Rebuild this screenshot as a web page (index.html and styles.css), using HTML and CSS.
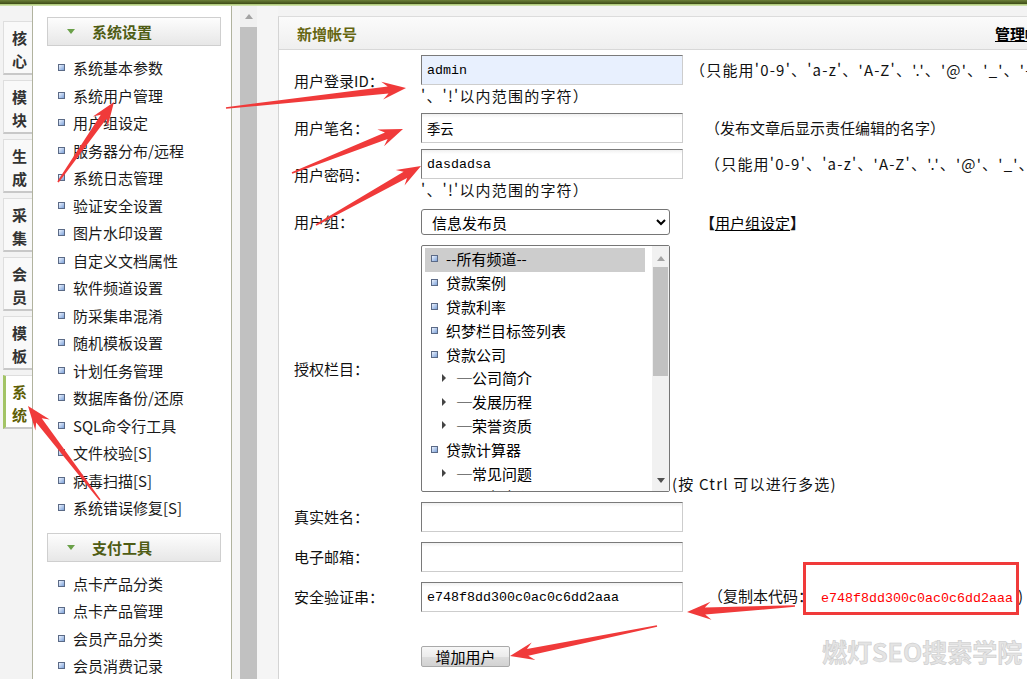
FILE: index.html
```html
<!DOCTYPE html>
<html lang="zh-CN">
<head>
    <meta charset="UTF-8">
    <meta name="viewport" content="width=device-width, initial-scale=1.0">
    <title>新增帐号</title>
    <link rel="stylesheet" href="styles.css">
</head>
<body>
    <div class="topbar"></div>
    <div class="frame">
        <div class="tabs">
            <div class="tab">核<br>心</div>
            <div class="tab">模<br>块</div>
            <div class="tab">生<br>成</div>
            <div class="tab">采<br>集</div>
            <div class="tab">会<br>员</div>
            <div class="tab">模<br>板</div>
            <div class="tab active">系<br>统</div>
        </div>

        <div class="menu">
            <div class="menu-head"><span class="caret"></span>系统设置</div>
            <ul class="menu-list">
                <li><i class="sq"></i>系统基本参数</li>
                <li><i class="sq"></i>系统用户管理</li>
                <li><i class="sq"></i>用户组设定</li>
                <li><i class="sq"></i>服务器分布/远程</li>
                <li><i class="sq"></i>系统日志管理</li>
                <li><i class="sq"></i>验证安全设置</li>
                <li><i class="sq"></i>图片水印设置</li>
                <li><i class="sq"></i>自定义文档属性</li>
                <li><i class="sq"></i>软件频道设置</li>
                <li><i class="sq"></i>防采集串混淆</li>
                <li><i class="sq"></i>随机模板设置</li>
                <li><i class="sq"></i>计划任务管理</li>
                <li><i class="sq"></i>数据库备份/还原</li>
                <li><i class="sq"></i>SQL命令行工具</li>
                <li><i class="sq"></i>文件校验[S]</li>
                <li><i class="sq"></i>病毒扫描[S]</li>
                <li><i class="sq"></i>系统错误修复[S]</li>
            </ul>
            <div class="menu-head"><span class="caret"></span>支付工具</div>
            <ul class="menu-list">
                <li><i class="sq"></i>点卡产品分类</li>
                <li><i class="sq"></i>点卡产品管理</li>
                <li><i class="sq"></i>会员产品分类</li>
                <li><i class="sq"></i>会员消费记录</li>
            </ul>
        </div>

        <div class="gutter">
            <div class="vscroll">
                <div class="sb-btn"><span class="arr-up"></span></div>
                <div class="sb-thumb"></div>
            </div>
        </div>

        <div class="main">
            <div class="main-head">
                <span class="title">新增帐号</span>
                <a class="manage" href="#">管理帐号</a>
            </div>
            <div class="form">
                <div class="row tight">
                    <label>用户登录ID：</label>
                    <div class="cell">
                        <div class="line">
                            <input class="txt autofill" type="text" value="admin">
                            <span class="hint spaced">（只能用'0-9'、'a-z'、'A-Z'、'.'、'@'、'_'、'-</span>
                        </div>
                        <div class="wrap">'、'!'以内范围的字符）</div>
                    </div>
                </div>
                <div class="row tight">
                    <label>用户笔名：</label>
                    <div class="cell">
                        <div class="line">
                            <input class="txt" type="text" value="季云">
                            <span class="hint far">（发布文章后显示责任编辑的名字）</span>
                        </div>
                    </div>
                </div>
                <div class="row tight">
                    <label>用户密码：</label>
                    <div class="cell">
                        <div class="line">
                            <input class="txt" type="text" value="dasdadsa">
                            <span class="hint far spaced">（只能用'0-9'、'a-z'、'A-Z'、'.'、'@'、'_'、'-</span>
                        </div>
                        <div class="wrap">'、'!'以内范围的字符）</div>
                    </div>
                </div>
                <div class="row">
                    <label>用户组：</label>
                    <div class="cell">
                        <div class="line">
                            <select class="group">
                                <option>信息发布员</option>
                                <option>超级管理员</option>
                            </select>
                            <span class="group-link">【<a href="#">用户组设定</a>】</span>
                        </div>
                    </div>
                </div>
                <div class="row">
                    <label>授权栏目：</label>
                    <div class="cell">
                        <div class="line bottom">
                            <div class="listbox">
                                <ul class="opts">
                                    <li class="on"><i class="sq"></i>--所有频道--</li>
                                    <li><i class="sq"></i>贷款案例</li>
                                    <li><i class="sq"></i>贷款利率</li>
                                    <li><i class="sq"></i>织梦栏目标签列表</li>
                                    <li><i class="sq"></i>贷款公司</li>
                                    <li class="sub"><i class="tri"></i>─公司简介</li>
                                    <li class="sub"><i class="tri"></i>─发展历程</li>
                                    <li class="sub"><i class="tri"></i>─荣誉资质</li>
                                    <li><i class="sq"></i>贷款计算器</li>
                                    <li class="sub"><i class="tri"></i>─常见问题</li>
                                    <li class="sub"><i class="tri"></i>─服务中心</li>
                                </ul>
                                <div class="lb-scroll">
                                    <div class="sb-btn"><span class="arr-up"></span></div>
                                    <div class="lb-thumb"></div>
                                    <div class="lb-space"></div>
                                    <div class="sb-btn"><span class="arr-down"></span></div>
                                </div>
                            </div>
                            <span class="multi-tip">(按 Ctrl 可以进行多选)</span>
                        </div>
                    </div>
                </div>
                <div class="row">
                    <label>真实姓名：</label>
                    <div class="cell"><div class="line"><input class="txt" type="text"></div></div>
                </div>
                <div class="row">
                    <label>电子邮箱：</label>
                    <div class="cell"><div class="line"><input class="txt" type="text"></div></div>
                </div>
                <div class="row">
                    <label>安全验证串：</label>
                    <div class="cell">
                        <div class="line">
                            <input class="txt" type="text" value="e748f8dd300c0ac0c6dd2aaa">
                            <span class="hint code-hint">（复制本代码：<span class="code">e748f8dd300c0ac0c6dd2aaa</span>)</span>
                        </div>
                    </div>
                </div>
                <div class="row submit">
                    <span></span>
                    <div class="cell"><button class="btn" type="button">增加用户</button></div>
                </div>
            </div>
        </div>
    </div>

    <div class="watermark">燃灯SEO搜索学院</div>

    <svg class="marks" id="marks" width="1027" height="679" viewBox="0 0 1027 679">
        <rect x="804.5" y="563.5" width="213" height="50" fill="none" stroke="#f03a3a" stroke-width="3"/>
    </svg>

    <script>
        // 截图标注箭头：起点 x,y -> 箭头尖 x,y
        var arrows = [
            [226, 108, 406, 88],
            [58, 182, 114, 102],
            [292, 173, 403, 129],
            [316, 225, 421, 166],
            [100, 500, 28, 406],
            [795, 606, 687, 612],
            [657, 626, 510, 656]
        ];
        var svg = document.getElementById('marks');
        arrows.forEach(function (a) {
            var dx = a[2] - a[0], dy = a[3] - a[1];
            var len = Math.sqrt(dx * dx + dy * dy);
            var ux = dx / len, uy = dy / len, nx = -uy, ny = ux;
            function p(back, side) {
                return (a[2] - ux * back + nx * side).toFixed(1) + ',' + (a[3] - uy * back + ny * side).toFixed(1);
            }
            var poly = document.createElementNS('http://www.w3.org/2000/svg', 'polygon');
            poly.setAttribute('points', [p(0, 0), p(24, 9), p(18, 3.5), p(len, 0.8), p(len, -0.8), p(18, -3.5), p(24, -9)].join(' '));
            poly.setAttribute('fill', '#f03a3a');
            svg.appendChild(poly);
        });
    </script>
</body>
</html>
```

FILE: styles.css
```css
* {
    box-sizing: border-box;
}
html, body {
    margin: 0;
    padding: 0;
}
body {
    position: relative;
    width: 1027px;
    height: 679px;
    overflow: hidden;
    font-family: "Noto Sans CJK SC", "Liberation Sans", sans-serif;
    font-size: 15px;
    color: #111;
    background: #f3f3f3;
}
.topbar {
    height: 6px;
    background: linear-gradient(#6b8038 0, #3d4b17 4px, #a7c46c 4px, #d9e8bc 6px);
}
.frame {
    display: flex;
    height: 673px;
    overflow: hidden;
}

/* 左侧竖排标签 */
.tabs {
    flex: none;
    width: 33px;
    padding: 15px 0 0 3px;
    border-right: 1px solid #b1b39f;
    display: flex;
    flex-direction: column;
    gap: 5px;
}
.tab {
    height: 54px;
    padding: 4px 0 0 3px;
    background: #f9f9f9;
    border: 1px solid #dedede;
    border-right: none;
    border-bottom: 2px solid #c8c8c8;
    text-align: center;
    font-weight: bold;
    line-height: 23px;
    color: #333;
}
.tab.active {
    background: #fff;
    border-left: 3px solid #a3c466;
    padding-left: 1px;
    color: #5e5e06;
}

/* 菜单 */
.menu {
    flex: none;
    width: 199px;
    padding-top: 11px;
    background: #fff;
    border-right: 1px solid #b1b39f;
}
.menu-head {
    margin: 0 10px 0 14px;
    height: 29px;
    padding-left: 19px;
    border: 1px solid #cfcfcf;
    background: linear-gradient(#fdfdfd, #e7e7e7);
    display: flex;
    align-items: center;
    font-weight: bold;
    color: #4f5c14;
}
.caret {
    width: 0;
    height: 0;
    border-left: 4px solid transparent;
    border-right: 4px solid transparent;
    border-top: 5px solid #6aa048;
    margin-right: 17px;
}
.menu-list {
    list-style: none;
    margin: 0;
    padding: 8px 0 11px;
}
.menu-list li {
    height: 27.5px;
    padding-left: 25px;
    display: flex;
    align-items: center;
    white-space: nowrap;
    color: #1a1a1a;
}
.sq {
    flex: none;
    width: 7px;
    height: 7px;
    margin-right: 8px;
    border: 1px solid #5b6a86;
    background: linear-gradient(135deg, #eef4ff, #7da2d9);
}

/* 菜单滚动条 */
.gutter {
    flex: none;
    width: 46px;
    padding-left: 8px;
    background: #f5f5f5;
}
.vscroll {
    width: 17px;
    height: 100%;
    display: flex;
    flex-direction: column;
    background: #f0f0f0;
}
.vscroll .sb-btn {
    height: 21px;
}
.sb-btn {
    flex: none;
    height: 17px;
    display: flex;
    align-items: center;
    justify-content: center;
}
.arr-up {
    width: 0;
    height: 0;
    border-left: 4px solid transparent;
    border-right: 4px solid transparent;
    border-bottom: 5px solid #a3a3a3;
}
.arr-down {
    width: 0;
    height: 0;
    border-left: 4px solid transparent;
    border-right: 4px solid transparent;
    border-top: 5px solid #505050;
}
.sb-thumb {
    flex: 1;
    background: #c1c1c1;
}

/* 主区域 */
.main {
    flex: none;
    width: 789px;
    margin-top: 10px;
    background: #fff;
    border-left: 1px solid #d4d4d4;
    border-top: 1px solid #dcdcdc;
}
.main-head {
    height: 33px;
    padding: 0 12px 0 18px;
    border-bottom: 1px solid #d8d8d8;
    background: linear-gradient(#fbfbfb, #efefef);
    display: flex;
    align-items: center;
    justify-content: space-between;
    font-weight: bold;
}
.main-head .title {
    color: #666611;
}
.main-head .manage {
    color: #000;
    text-decoration: underline;
}
.form {
    padding: 2px 0 0 15px;
}
.row {
    display: grid;
    grid-template-columns: 127px auto;
    align-items: center;
    padding: 5px 0;
}
.row.tight {
    padding: 3px 0;
}
.row.submit {
    padding-top: 29px;
}
.row label {
    line-height: 20px;
    white-space: nowrap;
}
.line {
    display: flex;
    align-items: center;
    white-space: nowrap;
}
.line.bottom {
    align-items: flex-end;
}
.wrap {
    line-height: 22px;
    letter-spacing: 1.2px;
    white-space: nowrap;
}
.txt {
    width: 262px;
    height: 30px;
    margin: 0;
    padding: 0 5px;
    border: 1px solid;
    border-color: #7a7a7a #cdcdcd #cdcdcd #7a7a7a;
    background: linear-gradient(#f0f0f0, #fff 4px);
    font-family: "Liberation Mono", "Noto Sans CJK SC", monospace;
    font-size: 13.33px;
    color: #000;
}
.txt.autofill {
    background: #e8f0fe;
}
.hint {
    margin-left: 7px;
    line-height: 20px;
}
.hint.far {
    margin-left: 22px;
}
.hint.spaced {
    letter-spacing: 1.2px;
}
.code-hint {
    margin-left: 25px;
}
.code {
    margin: 0 5px 0 8px;
    font-family: "Liberation Mono", monospace;
    font-size: 13.33px;
    color: #f00;
}
.group {
    width: 249px;
    height: 26px;
    margin: 0;
    padding-left: 6px;
    border: 1px solid #767676;
    border-radius: 3px;
    background: #fff;
    font-family: "Noto Sans CJK SC", sans-serif;
    font-size: 15px;
    color: #000;
}
.group-link {
    margin-left: 30px;
    font-weight: bold;
}
.group-link a {
    color: #000;
    font-weight: normal;
    text-decoration: underline;
}

/* 多选栏目 */
.listbox {
    flex: none;
    width: 249px;
    height: 247px;
    border: 1px solid #767676;
    border-radius: 2px;
    background: #fff;
    display: flex;
}
.opts {
    flex: 1;
    list-style: none;
    margin: 0;
    padding: 2px 7px 0 3px;
    overflow: hidden;
}
.opts li {
    height: 23.8px;
    padding: 0 0 2px 6px;
    display: flex;
    align-items: center;
    white-space: nowrap;
    color: #000;
}
.opts li.on {
    background: #cdcdcd;
}
.opts li.sub {
    padding-left: 17px;
}
.tri {
    flex: none;
    width: 0;
    height: 0;
    border-top: 4px solid transparent;
    border-bottom: 4px solid transparent;
    border-left: 4px solid #444;
    margin-right: 11px;
}
.lb-scroll {
    flex: none;
    width: 17px;
    padding: 4px 0 2px;
    background: #f1f1f1;
    display: flex;
    flex-direction: column;
}
.lb-thumb {
    height: 109px;
    margin: 0 1px;
    background: #c1c1c1;
}
.lb-space {
    flex: 1;
}
.multi-tip {
    margin-left: 2px;
    line-height: 16px;
    letter-spacing: 1.2px;
}
.btn {
    width: 89px;
    height: 21px;
    padding: 0;
    border: 1px solid #a9a9a9;
    border-radius: 2px;
    background: linear-gradient(#f7f7f7 0, #ececec 50%, #dedede 50%, #d2d2d2 100%);
    font-family: "Noto Sans CJK SC", sans-serif;
    font-size: 15px;
    line-height: 19px;
    color: #000;
}

/* 水印与标注 */
.watermark {
    position: absolute;
    left: 822px;
    top: 634px;
    font-size: 25px;
    font-weight: bold;
    line-height: 34px;
    color: #e4e4e4;
    -webkit-text-stroke: 0.5px #c8c8c8;
    white-space: nowrap;
}
.marks {
    position: absolute;
    left: 0;
    top: 0;
    pointer-events: none;
}
```
